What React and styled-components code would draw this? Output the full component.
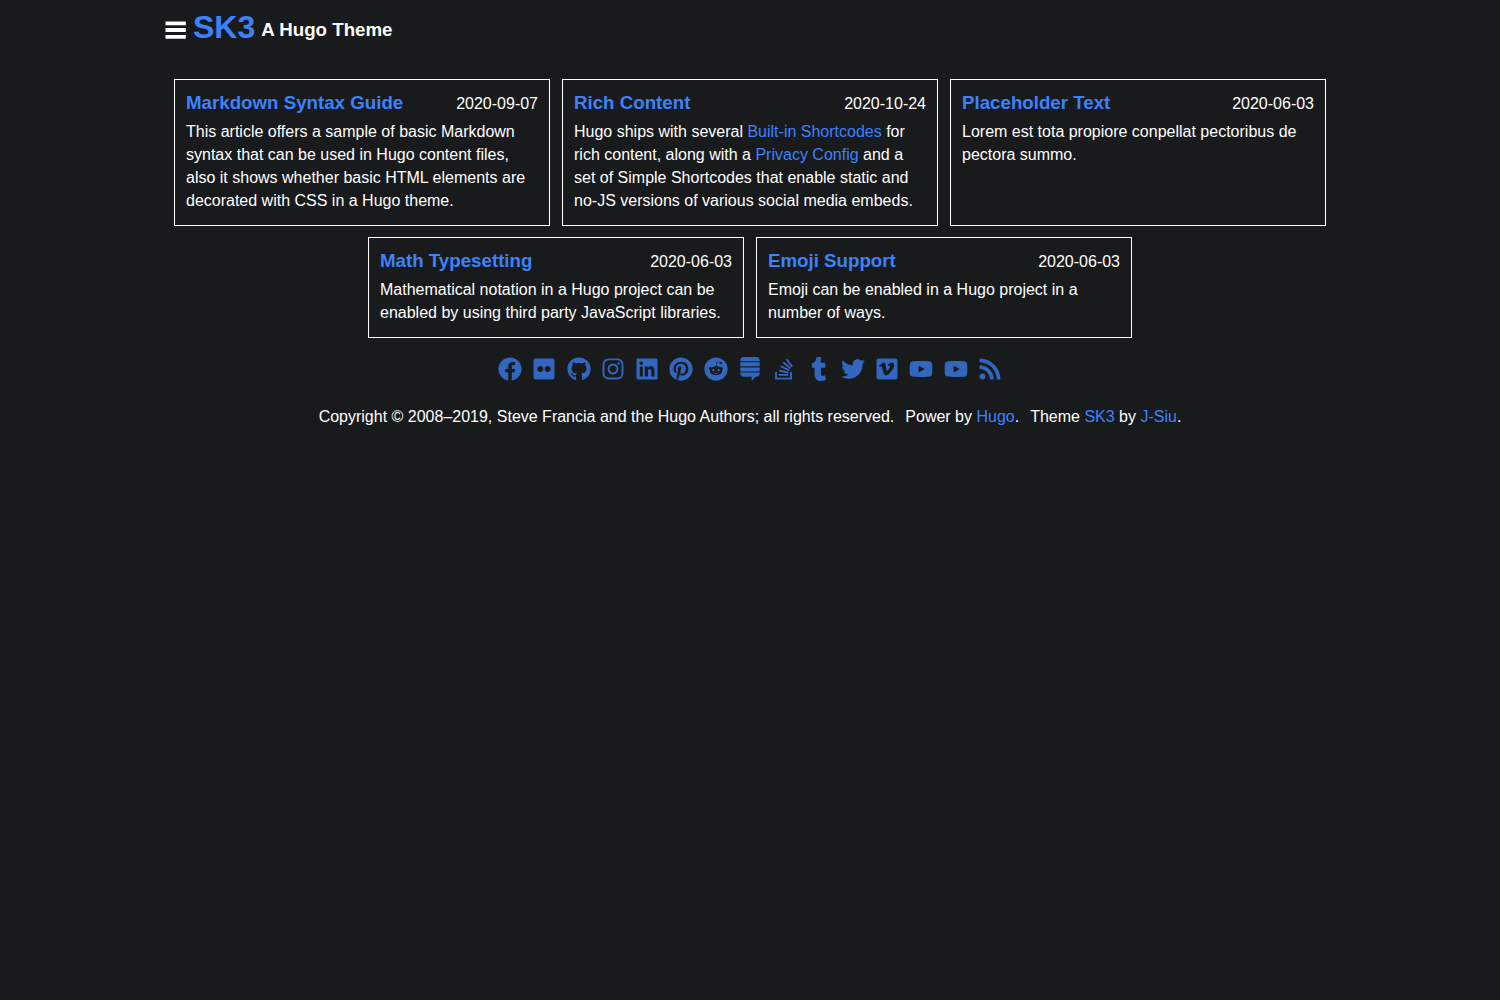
import React from "react";
import styled, { createGlobalStyle } from "styled-components";
import {
  FaFacebook,
  FaFlickr,
  FaGithub,
  FaInstagram,
  FaLinkedin,
  FaPinterest,
  FaReddit,
  FaStackExchange,
  FaStackOverflow,
  FaTumblr,
  FaTwitter,
  FaVimeo,
  FaYoutube,
  FaRss,
} from "react-icons/fa";

const GlobalStyle = createGlobalStyle`
  *, *::before, *::after { box-sizing: border-box; }
  body {
    margin: 0;
    background: #191a1c;
    color: #fff;
    font-family: "Liberation Sans", Arial, sans-serif;
    font-size: 16px;
    line-height: 23px;
  }
`;

const Page = styled.div`
  max-width: 1200px;
  margin: 0 auto;
  padding: 0 12px;
`;

const Link = styled.a`
  color: #3b82ff;
  text-decoration: none;
  &:hover { text-decoration: underline; }
`;

const Header = styled.header`
  display: flex;
  align-items: flex-start;
  height: 79px;
  padding: 4px 2px 0;
`;

const MenuButton = styled.button`
  display: flex;
  margin: 14px 5px 0 0;
  padding: 0;
  border: 0;
  background: none;
  color: inherit;
  cursor: pointer;
`;

const SiteTitle = styled.h1`
  margin: 0 6px 0 0;
  font-size: 32px;
  line-height: 46px;
`;

const Tagline = styled.h3`
  margin: 14px 0 0;
`;

const Cards = styled.main`
  display: flex;
  flex-wrap: wrap;
  justify-content: center;
  gap: 11px 12px;
`;

const Card = styled.article`
  flex: 0 1 376px;
  padding: 11px 11px 13px;
  border: 1px solid #fff;
`;

const CardHead = styled.div`
  display: flex;
  justify-content: space-between;
  align-items: baseline;
  margin-bottom: 4px;
  line-height: 24px;
`;

const CardTitle = styled.h3`
  margin: 0;
`;

const Summary = styled.p`
  margin: 0;
`;

const Social = styled.nav`
  display: flex;
  justify-content: space-between;
  max-width: 510px;
  margin: 19px auto 0;
`;

const SocialLink = styled.a`
  display: flex;
  justify-content: center;
  width: 30px;
  color: #3267bf;
  font-size: 24px;
`;

const Footer = styled.footer`
  display: flex;
  flex-wrap: wrap;
  justify-content: center;
  gap: 0 11px;
  padding: 24px 0;
`;

const posts = [
  {
    title: "Markdown Syntax Guide",
    date: "2020-09-07",
    text: "This article offers a sample of basic Markdown syntax that can be used in Hugo content files, also it shows whether basic HTML elements are decorated with CSS in a Hugo theme.",
  },
  {
    title: "Rich Content",
    date: "2020-10-24",
    text: (
      <>
        Hugo ships with several <Link href="#shortcodes">Built-in Shortcodes</Link> for
        rich content, along with a <Link href="#privacy">Privacy Config</Link> and a set
        of Simple Shortcodes that enable static and no-JS versions of various social
        media embeds.
      </>
    ),
  },
  {
    title: "Placeholder Text",
    date: "2020-06-03",
    text: "Lorem est tota propiore conpellat pectoribus de pectora summo.",
  },
  {
    title: "Math Typesetting",
    date: "2020-06-03",
    text: "Mathematical notation in a Hugo project can be enabled by using third party JavaScript libraries.",
  },
  {
    title: "Emoji Support",
    date: "2020-06-03",
    text: "Emoji can be enabled in a Hugo project in a number of ways.",
  },
];

const networks = [
  ["Facebook", FaFacebook],
  ["Flickr", FaFlickr],
  ["GitHub", FaGithub],
  ["Instagram", FaInstagram],
  ["LinkedIn", FaLinkedin],
  ["Pinterest", FaPinterest],
  ["Reddit", FaReddit],
  ["Stack Exchange", FaStackExchange],
  ["Stack Overflow", FaStackOverflow],
  ["Tumblr", FaTumblr],
  ["Twitter", FaTwitter],
  ["Vimeo", FaVimeo],
  ["YouTube channel", FaYoutube],
  ["YouTube user", FaYoutube],
  ["RSS", FaRss],
];

export default function App() {
  return (
    <>
      <GlobalStyle />
      <Page>
        <Header>
          <MenuButton type="button" aria-label="Menu">
            <svg width="24" height="24" viewBox="0 0 24 24" fill="currentColor" aria-hidden="true">
              <path d="M1.5 3.5h20.3v3.7h-20.3zM1.5 10.1h20.3v3.8h-20.3zM1.5 17h20.3v3.8h-20.3z" />
            </svg>
          </MenuButton>
          <SiteTitle>
            <Link href="#home">SK3</Link>
          </SiteTitle>
          <Tagline>A Hugo Theme</Tagline>
        </Header>
        <Cards>
          {posts.map(({ title, date, text }) => (
            <Card key={title}>
              <CardHead>
                <CardTitle>
                  <Link href="#post">{title}</Link>
                </CardTitle>
                <time dateTime={date}>{date}</time>
              </CardHead>
              <Summary>{text}</Summary>
            </Card>
          ))}
        </Cards>
        <Social aria-label="Social">
          {networks.map(([name, Icon]) => (
            <SocialLink key={name} href="#social" aria-label={name}>
              <Icon />
            </SocialLink>
          ))}
        </Social>
        <Footer>
          <span>
            Copyright © 2008–2019, Steve Francia and the Hugo Authors; all rights reserved.
          </span>
          <span>
            Power by <Link href="#hugo">Hugo</Link>.
          </span>
          <span>
            Theme <Link href="#sk3">SK3</Link> by <Link href="#j-siu">J-Siu</Link>.
          </span>
        </Footer>
      </Page>
    </>
  );
}
